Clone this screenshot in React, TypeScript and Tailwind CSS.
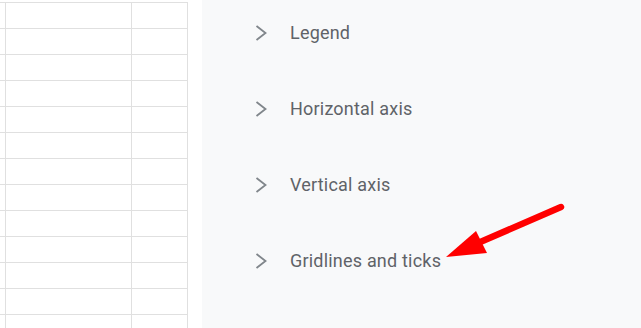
// Chart editor side panel next to a spreadsheet grid, with a red callout arrow

const ROWS = Array.from({ length: 13 }, (_, i) => i);

const SECTIONS = ["Legend", "Horizontal axis", "Vertical axis", "Gridlines and ticks"];

function Chevron() {
  return (
    <svg width="12" height="16" viewBox="0 0 12 16" className="shrink-0">
      <polyline
        points="1.5,1 10.5,8 1.5,15"
        fill="none"
        stroke="#80868b"
        strokeWidth="1.8"
        strokeLinejoin="miter"
      />
    </svg>
  );
}

function SheetGrid() {
  return (
    <div className="flex w-[188px] flex-col bg-white pt-[2px]">
      {ROWS.map((r) => (
        <div key={r} className="flex h-[26px] shrink-0 border-t border-[#e0e0e0]">
          <div className="w-[5px]" />
          <div className="w-[126px] border-l border-[#e0e0e0]" />
          <div className="w-[57px] border-x border-[#e0e0e0]" />
        </div>
      ))}
    </div>
  );
}

export default function App() {
  return (
    <div
      className="relative flex h-[328px] w-[641px] overflow-hidden bg-white"
      style={{ fontFamily: "Roboto, 'Noto Sans', sans-serif" }}
    >
      <SheetGrid />
      <div className="w-[14px] bg-white" />
      <div className="flex flex-1 flex-col gap-[52px] bg-[#f8f9fa] pt-[21px] pl-[53px]">
        {SECTIONS.map((label) => (
          <div key={label} className="flex h-[24px] items-center gap-[23px]">
            <Chevron />
            <span className="text-[18px] leading-none tracking-[0.2px] text-[#5f6368]">{label}</span>
          </div>
        ))}
      </div>

      <svg
        className="pointer-events-none absolute inset-0"
        width="641"
        height="328"
        viewBox="0 0 641 328"
      >
        <line x1="561" y1="207" x2="478" y2="243" stroke="#ff0000" strokeWidth="6.5" strokeLinecap="round" />
        <polygon points="446,257 476,231 487,253" fill="#ff0000" />
      </svg>
    </div>
  );
}
